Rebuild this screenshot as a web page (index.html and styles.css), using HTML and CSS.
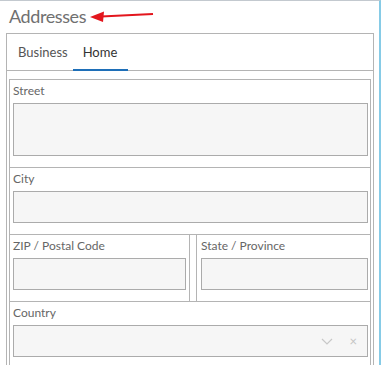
FILE: index.html
```html
<!DOCTYPE html>
<html lang="en">
<head>
  <meta charset="UTF-8" />
  <meta name="viewport" content="width=device-width, initial-scale=1.0" />
  <title>Addresses</title>
  <link rel="stylesheet" href="styles.css">
</head>
<body>

<div class="panel">
  <div class="panel-title">
    <span>Addresses</span>
    <svg class="arrow" width="66" height="16" viewBox="0 0 66 16">
      <line x1="12" y1="7.5" x2="64" y2="5" stroke="#e3161d" stroke-width="2" />
      <polygon points="1,8 15,2.5 14,13" fill="#e3161d" />
    </svg>
  </div>

  <div class="tab-box">
    <div class="tab-bar">
      <div class="tab">Business</div>
      <div class="tab active">Home</div>
    </div>

    <div class="tab-body">
      <div class="form-box">
        <div class="row">
          <div class="cell">
            <label>Street</label>
            <div class="input tall"></div>
          </div>
        </div>
        <div class="row">
          <div class="cell">
            <label>City</label>
            <div class="input"></div>
          </div>
        </div>
        <div class="row split">
          <div class="cell zip">
            <label>ZIP / Postal Code</label>
            <div class="input"></div>
          </div>
          <div class="cell state">
            <label>State / Province</label>
            <div class="input"></div>
          </div>
        </div>
        <div class="row">
          <div class="cell">
            <label>Country</label>
            <div class="input select">
              <svg class="chev" width="12" height="7" viewBox="0 0 12 7">
                <polyline points="1,1 6,6 11,1" fill="none" stroke="#c8c8c8" stroke-width="1.2" />
              </svg>
              <span class="clear">&times;</span>
            </div>
          </div>
        </div>
      </div>
    </div>
  </div>
</div>

</body>
</html>
```

FILE: styles.css
```css
body {
  margin: 0;
  padding: 0;
  font-family: 'Lato', 'Noto Sans', sans-serif;
  background-color: #fff;
  color: #666;
}
.panel {
  width: 379px;
  height: 364px;
  border-top: 1px solid #c3c9cf;
  border-right: 2px solid #86cbe6;
  overflow: hidden;
}
.panel-title {
  height: 32px;
  padding-left: 9px;
  display: flex;
  align-items: center;
  font-size: 18px;
  letter-spacing: -0.4px;
  color: #707070;
}
.panel-title span {
  margin-top: -2px;
}
.arrow {
  margin-left: 3px;
  margin-top: -1px;
}
.tab-box {
  margin-left: 6px;
  width: 366px;
  height: 400px;
  border: 1px solid #b4b4b4;
  border-bottom: none;
}
.tab-bar {
  height: 36px;
  border-bottom: 1px solid #b4b4b4;
  display: flex;
  padding-left: 1px;
}
.tab {
  height: 35px;
  margin-bottom: -1px;
  padding: 0 5px 0 10px;
  display: flex;
  align-items: center;
  font-size: 13px;
  color: #555;
  border-bottom: 2px solid transparent;
}
.tab.active {
  padding-right: 11px;
  color: #333;
  border-bottom-color: #1e6fb8;
}
.tab-body {
  padding: 8px 2px 0 2px;
}
.form-box {
  border: 1px solid #b4b4b4;
  border-bottom: none;
}
.row {
  border-bottom: 1px solid #b4b4b4;
}
.row.split {
  display: flex;
}
.cell {
  padding: 0 2px 11px 3px;
}
.cell.zip {
  width: 180px;
  box-sizing: border-box;
  padding-right: 3px;
  border-right: 1px solid #b4b4b4;
}
.cell.state {
  flex: 1;
  margin-left: 6px;
  padding-left: 4px;
  border-left: 1px solid #b4b4b4;
}
label {
  display: block;
  height: 23px;
  padding-top: 3px;
  box-sizing: border-box;
  font-size: 12px;
  color: #666;
}
.input {
  height: 32px;
  box-sizing: border-box;
  background-color: #f6f6f6;
  border: 1px solid #ababab;
}
.input.tall {
  height: 53px;
}
.input.select {
  display: flex;
  align-items: center;
  justify-content: flex-end;
  padding-right: 10px;
  gap: 16px;
}
.clear {
  color: #c4c4c4;
  font-size: 13px;
  line-height: 1;
}
```
